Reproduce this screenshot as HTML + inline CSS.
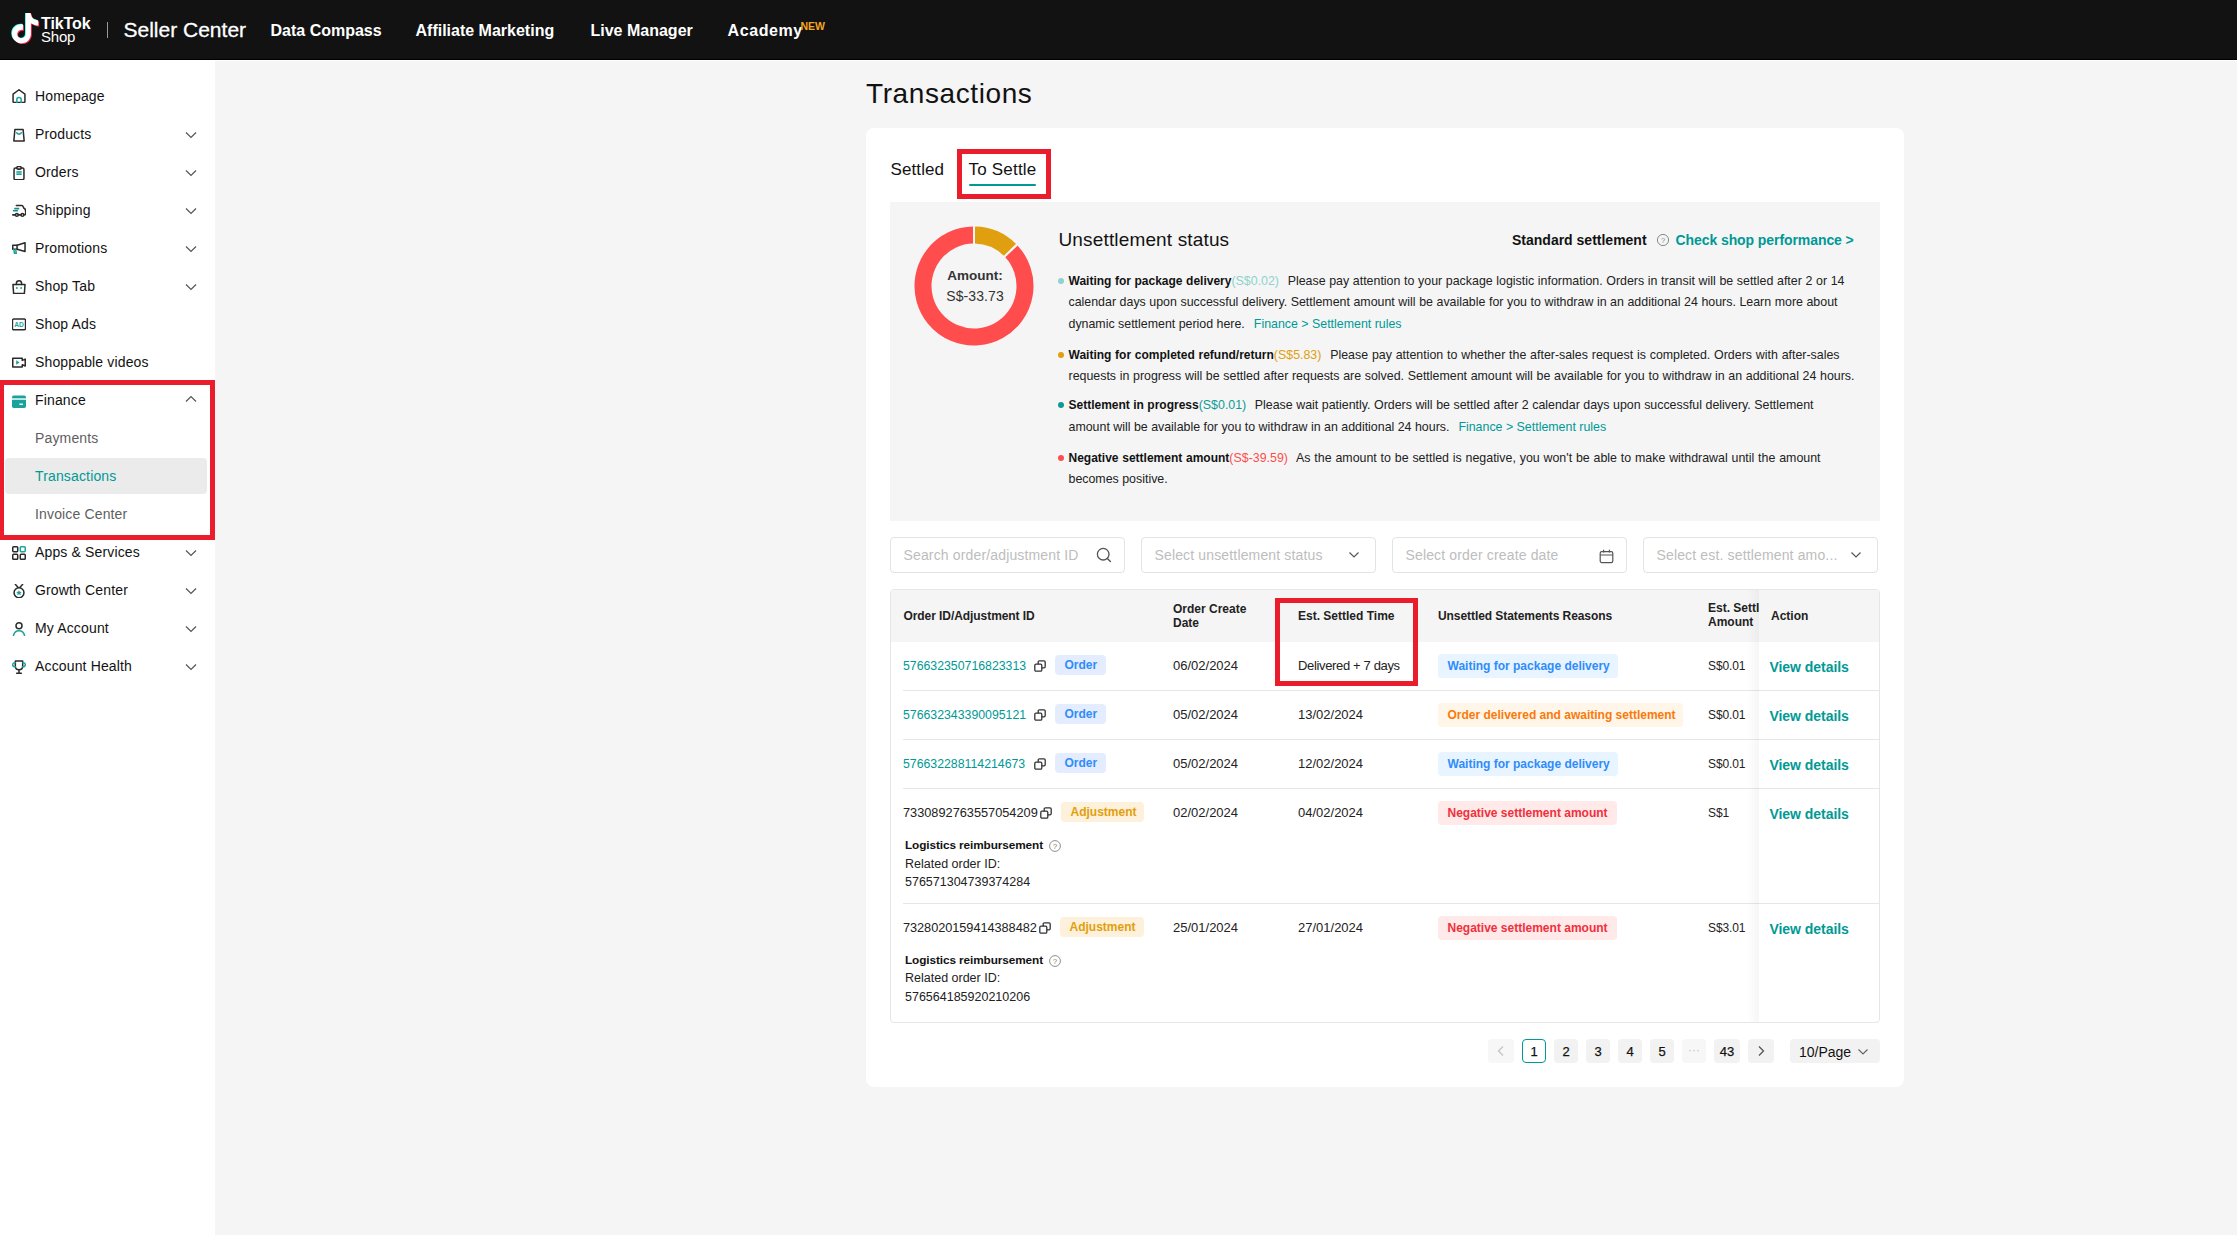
<!DOCTYPE html>
<html><head><meta charset="utf-8"><title>Transactions</title>
<style>
html,body{margin:0;padding:0;}
body{width:2237px;height:1235px;overflow:hidden;background:#f5f5f5;position:relative;font-family:"Liberation Sans",sans-serif;}
.t{position:absolute;white-space:nowrap;}
svg{display:block}
</style></head><body>

<div style="position:absolute;left:0px;top:0px;width:2237px;height:59px;background:#121212"></div>
<div style="position:absolute;left:0px;top:59px;width:2237px;height:1px;background:#000"></div>
<div style="position:absolute;left:0px;top:60px;width:2237px;height:1px;background:#fff"></div>
<svg style="position:absolute;left:9.5px;top:13.2px;" width="31" height="34" viewBox="0 0 31 34" fill="none"><g transform="scale(1.26)"><path transform="translate(-0.6,-0.5)" d="M12.525.02c1.31-.02 2.61-.01 3.91-.02.08 1.53.63 3.09 1.75 4.17 1.12 1.11 2.7 1.62 4.24 1.79v4.03c-1.44-.05-2.89-.35-4.2-.97-.57-.26-1.1-.59-1.62-.93-.01 2.92.01 5.84-.02 8.75-.08 1.4-.54 2.79-1.35 3.94-1.310 1.92-3.58 3.17-5.91 3.21-1.43.08-2.86-.31-4.08-1.030-2.02-1.19-3.44-3.37-3.65-5.71-.02-.5-.03-1-.01-1.49.18-1.9 1.12-3.72 2.58-4.96 1.66-1.44 3.98-2.13 6.15-1.72.02 1.48-.04 2.96-.04 4.44-.99-.32-2.15-.23-3.02.37-.63.41-1.11 1.04-1.36 1.750-.21.51-.15 1.07-.14 1.61.24 1.64 1.82 3.02 3.5 2.87 1.12-.01 2.19-.66 2.77-1.61.19-.33.4-.67.41-1.06.1-1.79.06-3.57.07-5.36.01-4.03-.01-8.05.02-12.07z" fill="#25f4ee"/><path transform="translate(0.7,0.7)" d="M12.525.02c1.31-.02 2.61-.01 3.91-.02.08 1.53.63 3.09 1.75 4.17 1.12 1.11 2.7 1.62 4.24 1.79v4.03c-1.44-.05-2.89-.35-4.2-.97-.57-.26-1.1-.59-1.62-.93-.01 2.92.01 5.84-.02 8.75-.08 1.4-.54 2.79-1.35 3.94-1.310 1.92-3.58 3.17-5.91 3.21-1.43.08-2.86-.31-4.08-1.030-2.02-1.19-3.44-3.37-3.65-5.71-.02-.5-.03-1-.01-1.49.18-1.9 1.12-3.72 2.58-4.96 1.66-1.44 3.98-2.13 6.15-1.72.02 1.48-.04 2.96-.04 4.44-.99-.32-2.15-.23-3.02.37-.63.41-1.11 1.04-1.36 1.750-.21.51-.15 1.07-.14 1.61.24 1.64 1.82 3.02 3.5 2.87 1.12-.01 2.19-.66 2.77-1.61.19-.33.4-.67.41-1.06.1-1.79.06-3.57.07-5.36.01-4.03-.01-8.05.02-12.07z" fill="#fe2c55"/><path d="M12.525.02c1.31-.02 2.61-.01 3.91-.02.08 1.53.63 3.09 1.75 4.17 1.12 1.11 2.7 1.62 4.24 1.79v4.03c-1.44-.05-2.89-.35-4.2-.97-.57-.26-1.1-.59-1.62-.93-.01 2.92.01 5.84-.02 8.75-.08 1.4-.54 2.79-1.35 3.94-1.310 1.92-3.58 3.17-5.91 3.21-1.43.08-2.86-.31-4.08-1.030-2.02-1.19-3.44-3.37-3.65-5.71-.02-.5-.03-1-.01-1.49.18-1.9 1.12-3.72 2.58-4.96 1.66-1.44 3.98-2.13 6.15-1.72.02 1.48-.04 2.96-.04 4.44-.99-.32-2.15-.23-3.02.37-.63.41-1.11 1.04-1.36 1.750-.21.51-.15 1.07-.14 1.61.24 1.64 1.82 3.02 3.5 2.87 1.12-.01 2.19-.66 2.77-1.61.19-.33.4-.67.41-1.06.1-1.79.06-3.57.07-5.36.01-4.03-.01-8.05.02-12.07z" fill="#fff"/></g></svg>
<div class="t" style="left:41px;top:15.86px;font-size:16px;line-height:16px;font-weight:700;color:#fff;letter-spacing:-0.1px">TikTok</div>
<div class="t" style="left:41px;top:29.30px;font-size:15px;line-height:15px;font-weight:400;color:#fff;letter-spacing:-0.2px">Shop</div>
<div style="position:absolute;left:107px;top:22px;width:1px;height:16px;background:#9a9a9a"></div>
<div class="t" style="left:123.5px;top:19.22px;font-size:21px;line-height:21px;font-weight:400;color:#fff;-webkit-text-stroke:0.3px #fff">Seller Center</div>
<div class="t" style="left:270.5px;top:22.66px;font-size:16px;line-height:16px;font-weight:700;color:#fff;">Data Compass</div>
<div class="t" style="left:415.5px;top:22.66px;font-size:16px;line-height:16px;font-weight:700;color:#fff;">Affiliate Marketing</div>
<div class="t" style="left:590.5px;top:22.66px;font-size:16px;line-height:16px;font-weight:700;color:#fff;">Live Manager</div>
<div class="t" style="left:727.5px;top:22.66px;font-size:16px;line-height:16px;font-weight:700;color:#fff;letter-spacing:0.6px">Academy</div>
<div class="t" style="left:800.5px;top:21.11px;font-size:10.5px;line-height:10.5px;font-weight:700;color:#f5a623;">NEW</div>
<div style="position:absolute;left:0px;top:60px;width:215px;height:1175px;background:#fff"></div>
<div style="position:absolute;left:5px;top:458px;width:202px;height:36px;background:#ebebeb;border-radius:4px"></div>
<div class="t" style="left:35px;top:88.95px;font-size:14px;line-height:14px;font-weight:400;color:#121212;letter-spacing:0.15px">Homepage</div>
<div class="t" style="left:35px;top:126.95px;font-size:14px;line-height:14px;font-weight:400;color:#121212;letter-spacing:0.15px">Products</div>
<svg style="position:absolute;left:185px;top:131px;" width="12" height="8" viewBox="0 0 12 8" fill="none"><path d="M1 1.5 L6 6.5 L11 1.5" stroke="#555" stroke-width="1.2" fill="none"/></svg>
<div class="t" style="left:35px;top:164.95px;font-size:14px;line-height:14px;font-weight:400;color:#121212;letter-spacing:0.15px">Orders</div>
<svg style="position:absolute;left:185px;top:169px;" width="12" height="8" viewBox="0 0 12 8" fill="none"><path d="M1 1.5 L6 6.5 L11 1.5" stroke="#555" stroke-width="1.2" fill="none"/></svg>
<div class="t" style="left:35px;top:202.95px;font-size:14px;line-height:14px;font-weight:400;color:#121212;letter-spacing:0.15px">Shipping</div>
<svg style="position:absolute;left:185px;top:207px;" width="12" height="8" viewBox="0 0 12 8" fill="none"><path d="M1 1.5 L6 6.5 L11 1.5" stroke="#555" stroke-width="1.2" fill="none"/></svg>
<div class="t" style="left:35px;top:240.95px;font-size:14px;line-height:14px;font-weight:400;color:#121212;letter-spacing:0.15px">Promotions</div>
<svg style="position:absolute;left:185px;top:245px;" width="12" height="8" viewBox="0 0 12 8" fill="none"><path d="M1 1.5 L6 6.5 L11 1.5" stroke="#555" stroke-width="1.2" fill="none"/></svg>
<div class="t" style="left:35px;top:278.95px;font-size:14px;line-height:14px;font-weight:400;color:#121212;letter-spacing:0.15px">Shop Tab</div>
<svg style="position:absolute;left:185px;top:283px;" width="12" height="8" viewBox="0 0 12 8" fill="none"><path d="M1 1.5 L6 6.5 L11 1.5" stroke="#555" stroke-width="1.2" fill="none"/></svg>
<div class="t" style="left:35px;top:316.95px;font-size:14px;line-height:14px;font-weight:400;color:#121212;letter-spacing:0.15px">Shop Ads</div>
<div class="t" style="left:35px;top:354.95px;font-size:14px;line-height:14px;font-weight:400;color:#121212;letter-spacing:0.15px">Shoppable videos</div>
<div class="t" style="left:35px;top:392.95px;font-size:14px;line-height:14px;font-weight:400;color:#121212;letter-spacing:0.15px">Finance</div>
<svg style="position:absolute;left:185px;top:395px;" width="12" height="8" viewBox="0 0 12 8" fill="none"><path d="M1 6.5 L6 1.5 L11 6.5" stroke="#555" stroke-width="1.2" fill="none"/></svg>
<div class="t" style="left:35px;top:430.95px;font-size:14px;line-height:14px;font-weight:400;color:#5e5e5e;letter-spacing:0.15px">Payments</div>
<div class="t" style="left:35px;top:468.95px;font-size:14px;line-height:14px;font-weight:400;color:#009995;letter-spacing:0.15px">Transactions</div>
<div class="t" style="left:35px;top:506.95px;font-size:14px;line-height:14px;font-weight:400;color:#5e5e5e;letter-spacing:0.15px">Invoice Center</div>
<div class="t" style="left:35px;top:544.95px;font-size:14px;line-height:14px;font-weight:400;color:#121212;letter-spacing:0.15px">Apps &amp; Services</div>
<svg style="position:absolute;left:185px;top:549px;" width="12" height="8" viewBox="0 0 12 8" fill="none"><path d="M1 1.5 L6 6.5 L11 1.5" stroke="#555" stroke-width="1.2" fill="none"/></svg>
<div class="t" style="left:35px;top:582.95px;font-size:14px;line-height:14px;font-weight:400;color:#121212;letter-spacing:0.15px">Growth Center</div>
<svg style="position:absolute;left:185px;top:587px;" width="12" height="8" viewBox="0 0 12 8" fill="none"><path d="M1 1.5 L6 6.5 L11 1.5" stroke="#555" stroke-width="1.2" fill="none"/></svg>
<div class="t" style="left:35px;top:620.95px;font-size:14px;line-height:14px;font-weight:400;color:#121212;letter-spacing:0.15px">My Account</div>
<svg style="position:absolute;left:185px;top:625px;" width="12" height="8" viewBox="0 0 12 8" fill="none"><path d="M1 1.5 L6 6.5 L11 1.5" stroke="#555" stroke-width="1.2" fill="none"/></svg>
<div class="t" style="left:35px;top:658.95px;font-size:14px;line-height:14px;font-weight:400;color:#121212;letter-spacing:0.15px">Account Health</div>
<svg style="position:absolute;left:185px;top:663px;" width="12" height="8" viewBox="0 0 12 8" fill="none"><path d="M1 1.5 L6 6.5 L11 1.5" stroke="#555" stroke-width="1.2" fill="none"/></svg>
<svg style="position:absolute;left:12px;top:89px;" width="14" height="14" viewBox="0.5 0.5 13 13" fill="none"><path d="M1.5 5.2 L7 1.2 L12.5 5.2 V12 Q12.5 13 11.5 13 H2.5 Q1.5 13 1.5 12 Z" stroke="#2b2b2b" stroke-width="1.4" fill="none" stroke-linejoin="round" stroke-linecap="round"/><path d="M5 13 V10.2 Q5 8.5 7 8.5 Q9 8.5 9 10.2 V13" stroke="#1aa39c" stroke-width="1.4" fill="none" stroke-linecap="round"/></svg>
<svg style="position:absolute;left:12px;top:128px;" width="14" height="14" viewBox="0.5 0.5 13 13" fill="none"><path d="M3.2 1.8 H10.8 L11.8 12.6 H2.2 Z" stroke="#2b2b2b" stroke-width="1.4" fill="none" stroke-linejoin="round" stroke-linecap="round"/><path d="M4.8 5 Q7 7.4 9.2 5" stroke="#1aa39c" stroke-width="1.4" fill="none" stroke-linecap="round"/></svg>
<svg style="position:absolute;left:12px;top:166px;" width="14" height="14" viewBox="0.5 0.5 13 13" fill="none"><rect x="2.4" y="2.4" width="9.2" height="10.8" rx="1.3" stroke="#2b2b2b" stroke-width="1.4" fill="none" stroke-linejoin="round" stroke-linecap="round"/><rect x="5" y="1" width="4" height="2.4" rx="1.1" fill="#fff" stroke="#2b2b2b" stroke-width="1.4" fill="none" stroke-linejoin="round" stroke-linecap="round"/><rect x="4.6" y="5.4" width="4.8" height="3.4" fill="#8fd3cf"/><rect x="4.6" y="5.4" width="4.8" height="1.2" fill="#1aa39c"/><rect x="4.6" y="7.6" width="4.8" height="1.2" fill="#1aa39c"/></svg>
<svg style="position:absolute;left:12px;top:204px;" width="14" height="14" viewBox="0.5 0.5 13 13" fill="none"><path d="M4.5 2 H9.6 Q10.6 2 11 3.2 L11.3 4.2 Q13.2 4.8 13.2 7.4 V9.4 Q13.2 10.4 12 10.4 H11.6" stroke="#2b2b2b" stroke-width="1.4" fill="none" stroke-linejoin="round" stroke-linecap="round"/><path d="M2.6 4.8 H7.2 M1.4 6.8 H6" stroke="#1a8f89" stroke-width="1.5"/><circle cx="5" cy="10.6" r="1.3" stroke="#2b2b2b" stroke-width="1.4" fill="none" stroke-linejoin="round" stroke-linecap="round"/><circle cx="10.2" cy="10.6" r="1.3" stroke="#2b2b2b" stroke-width="1.4" fill="none" stroke-linejoin="round" stroke-linecap="round"/><path d="M1.2 10.6 H3.6 M6.4 10.6 H8.8" stroke="#2b2b2b" stroke-width="1.4" fill="none" stroke-linejoin="round" stroke-linecap="round"/></svg>
<svg style="position:absolute;left:12px;top:242px;" width="14" height="14" viewBox="0.5 0.5 13 13" fill="none"><path d="M1.2 3.6 H5.2 V7.2 H1.2 Z" stroke="#2b2b2b" stroke-width="1.4" fill="none" stroke-linejoin="round" stroke-linecap="round"/><path d="M5.2 3.6 L12.6 1.2 V9.4 L5.2 7.2" stroke="#2b2b2b" stroke-width="1.4" fill="none" stroke-linejoin="round" stroke-linecap="round"/><path d="M2.2 7.4 L2.8 11 H4.4 L4 7.4" stroke="#1aa39c" stroke-width="1.4" fill="none" stroke-linecap="round"/></svg>
<svg style="position:absolute;left:12px;top:280px;" width="14" height="14" viewBox="0.5 0.5 13 13" fill="none"><path d="M1.4 4.6 H12.6 L12 13 H2 Z" stroke="#2b2b2b" stroke-width="1.4" fill="none" stroke-linejoin="round" stroke-linecap="round"/><path d="M4.6 4.6 V3.6 Q4.6 1.2 7 1.2 Q9.4 1.2 9.4 3.6 V4.6" stroke="#2b2b2b" stroke-width="1.4" fill="none" stroke-linejoin="round" stroke-linecap="round"/><circle cx="5" cy="8" r="0.9" fill="#1aa39c"/><circle cx="9" cy="8" r="0.9" fill="#1aa39c"/></svg>
<svg style="position:absolute;left:12px;top:318px;" width="14" height="14" viewBox="0.5 0.5 13 13" fill="none"><rect x="0.9" y="1.5" width="12.2" height="10" rx="1.3" stroke="#2b2b2b" stroke-width="1.4" fill="none" stroke-linejoin="round" stroke-linecap="round"/><text x="7" y="9.2" font-family="Liberation Sans" font-size="6.2" font-weight="700" fill="#1aa39c" text-anchor="middle">AD</text></svg>
<svg style="position:absolute;left:12px;top:356px;" width="14" height="14" viewBox="0.5 0.5 13 13" fill="none"><path d="M1.2 2.5 H10 V4.6 L12.8 3.4 V9.8 L10 8.6 V10.7 H1.2 Z" stroke="#2b2b2b" stroke-width="1.4" fill="none" stroke-linejoin="round" stroke-linecap="round"/><path d="M4.4 4.4 L7.6 6.5 L4.4 8.6 Z" fill="#1aa39c"/></svg>
<svg style="position:absolute;left:12px;top:395px;" width="14" height="14" viewBox="0.5 0.5 13 13" fill="none"><rect x="0.5" y="1" width="13" height="11.5" rx="1.6" fill="#1aa39c"/><rect x="0.5" y="3.6" width="13" height="1.3" fill="#fff"/><rect x="7.4" y="8.4" width="3.2" height="1.4" fill="#fff"/></svg>
<svg style="position:absolute;left:12px;top:546px;" width="14" height="14" viewBox="0.5 0.5 13 13" fill="none"><rect x="1.2" y="1.2" width="4.6" height="4.6" rx="0.8" stroke="#2b2b2b" stroke-width="1.4" fill="none" stroke-linejoin="round" stroke-linecap="round"/><rect x="8.2" y="1.2" width="4.6" height="4.6" rx="0.8" stroke="#1aa39c" stroke-width="1.4"/><rect x="1.2" y="8.2" width="4.6" height="4.6" rx="0.8" stroke="#2b2b2b" stroke-width="1.4" fill="none" stroke-linejoin="round" stroke-linecap="round"/><rect x="8.2" y="8.2" width="4.6" height="4.6" rx="0.8" stroke="#2b2b2b" stroke-width="1.4" fill="none" stroke-linejoin="round" stroke-linecap="round"/></svg>
<svg style="position:absolute;left:12px;top:584px;" width="14" height="14" viewBox="0.5 0.5 13 13" fill="none"><circle cx="7" cy="8.6" r="4.6" stroke="#2b2b2b" stroke-width="1.4" fill="none" stroke-linejoin="round" stroke-linecap="round"/><path d="M3.6 0.8 L6 3.6 M10.4 0.8 L8 3.6" stroke="#2b2b2b" stroke-width="1.4" fill="none" stroke-linejoin="round" stroke-linecap="round"/><path d="M7 6.2 L7.8 7.8 L9.6 8 L8.3 9.2 L8.6 11 L7 10.1 L5.4 11 L5.7 9.2 L4.4 8 L6.2 7.8 Z" fill="#1aa39c"/></svg>
<svg style="position:absolute;left:12px;top:622px;" width="14" height="14" viewBox="0.5 0.5 13 13" fill="none"><circle cx="7" cy="4" r="2.8" stroke="#2b2b2b" stroke-width="1.4" fill="none" stroke-linejoin="round" stroke-linecap="round"/><path d="M1.8 13.4 Q2.6 8.6 7 8.6 Q11.4 8.6 12.2 13.4" stroke="#1aa39c" stroke-width="1.4" fill="none" stroke-linecap="round"/></svg>
<svg style="position:absolute;left:12px;top:660px;" width="14" height="14" viewBox="0.5 0.5 13 13" fill="none"><path d="M3.6 1.4 H10.4 V6.4 Q10.4 9.6 7 9.6 Q3.6 9.6 3.6 6.4 Z" stroke="#2b2b2b" stroke-width="1.4" fill="none" stroke-linejoin="round" stroke-linecap="round"/><path d="M7 9.6 V12.6 M4.8 12.8 H9.2" stroke="#2b2b2b" stroke-width="1.4" fill="none" stroke-linejoin="round" stroke-linecap="round"/><path d="M3.4 3 Q1 3 1.2 5.2 Q1.4 6.8 3.6 6.8 M10.6 3 Q13 3 12.8 5.2 Q12.6 6.8 10.4 6.8" stroke="#1aa39c" stroke-width="1.4" fill="none" stroke-linecap="round"/></svg>
<div style="position:absolute;left:-1px;top:380px;width:216px;height:159.5px;box-sizing:border-box;border:5px solid #e91d2b"></div>
<div class="t" style="left:866px;top:79.60px;font-size:28px;line-height:28px;font-weight:400;color:#121212;letter-spacing:0.6px">Transactions</div>
<div style="position:absolute;left:866px;top:128px;width:1038px;height:959px;background:#fff;border-radius:8px"></div>
<div class="t" style="left:890.5px;top:160.91px;font-size:17px;line-height:17px;font-weight:400;color:#121212;letter-spacing:0.1px">Settled</div>
<div class="t" style="left:968.5px;top:160.91px;font-size:17px;line-height:17px;font-weight:400;color:#121212;letter-spacing:0.2px">To Settle</div>
<div style="position:absolute;left:969px;top:184px;width:67px;height:2px;background:#009995;border-radius:1px"></div>
<div style="position:absolute;left:957px;top:149px;width:94px;height:50px;box-sizing:border-box;border:5px solid #e91d2b"></div>
<div style="position:absolute;left:890px;top:202px;width:990px;height:319px;background:#f5f5f5"></div>
<svg style="position:absolute;left:910px;top:222px;" width="128" height="128" viewBox="0 0 128 128" fill="none"><path d="M64.89 13.01 A51 51 0 0 1 100.06 27.94" stroke="#e09f0e" stroke-width="17"/><path d="M101.30 29.22 A51 51 0 1 1 63.11 13.01" stroke="#ff4d4d" stroke-width="17"/><line x1="64.00" y1="23.00" x2="64.00" y2="2.00" stroke="#f5f5f5" stroke-width="2"/><line x1="93.49" y1="35.52" x2="108.60" y2="20.93" stroke="#f5f5f5" stroke-width="2"/></svg>
<div class="t" style="left:945px;top:269.27px;font-size:13.5px;line-height:13.5px;font-weight:700;color:#333;width:60px;text-align:center">Amount:</div>
<div class="t" style="left:945px;top:288.85px;font-size:14px;line-height:14px;font-weight:400;color:#333;width:60px;text-align:center;letter-spacing:0.1px">S$-33.73</div>
<div class="t" style="left:1058.5px;top:229.92px;font-size:19px;line-height:19px;font-weight:400;color:#121212;letter-spacing:0.15px">Unsettlement status</div>
<div class="t" style="left:1512px;top:233.15px;font-size:14px;line-height:14px;font-weight:700;color:#121212;">Standard settlement</div>
<svg style="position:absolute;left:1656px;top:233px;" width="14" height="14" viewBox="0 0 14 14" fill="none"><circle cx="7" cy="7" r="5.6" stroke="#8a8a8a" stroke-width="1"/><text x="7" y="9.6" font-family="Liberation Sans" font-size="7.5" fill="#8a8a8a" text-anchor="middle">?</text></svg>
<div class="t" style="left:1675.5px;top:233.15px;font-size:14px;line-height:14px;font-weight:700;color:#009995;letter-spacing:-0.08px">Check shop performance &gt;</div>
<div style="position:absolute;left:1058px;top:278.0px;width:6px;height:6px;background:#8ed3ce;border-radius:50%"></div>
<div class="t" style="left:1068.5px;top:274.80px;font-size:12.4px;line-height:12.4px;font-weight:400;color:#222;width:776px;text-align:justify;text-align-last:justify;"><b style="color:#121212;font-size:12px">Waiting for package delivery</b><span style="color:#8ed3ce;margin-right:5px">(S$0.02)</span> Please pay attention to your package logistic information. Orders in transit will be settled after 2 or 14</div>
<div class="t" style="left:1068.5px;top:295.80px;font-size:12.4px;line-height:12.4px;font-weight:400;color:#222;width:769px;text-align:justify;text-align-last:justify;">calendar days upon successful delivery. Settlement amount will be available for you to withdraw in an additional 24 hours. Learn more about</div>
<div class="t" style="left:1068.5px;top:317.80px;font-size:12.4px;line-height:12.4px;font-weight:400;color:#222;">dynamic settlement period here.<span style="color:#009995;margin-left:9px">Finance &gt; Settlement rules</span></div>
<div style="position:absolute;left:1058px;top:352.3px;width:6px;height:6px;background:#e09f0e;border-radius:50%"></div>
<div class="t" style="left:1068.5px;top:349.10px;font-size:12.4px;line-height:12.4px;font-weight:400;color:#222;width:771px;text-align:justify;text-align-last:justify;"><b style="color:#121212;font-size:12px">Waiting for completed refund/return</b><span style="color:#e09f0e;margin-right:5px">(S$5.83)</span> Please pay attention to whether the after-sales request is completed. Orders with after-sales</div>
<div class="t" style="left:1068.5px;top:369.80px;font-size:12.4px;line-height:12.4px;font-weight:400;color:#222;width:786px;text-align:justify;text-align-last:justify;">requests in progress will be settled after requests are solved. Settlement amount will be available for you to withdraw in an additional 24 hours.</div>
<div style="position:absolute;left:1058px;top:402.2px;width:6px;height:6px;background:#0f9a94;border-radius:50%"></div>
<div class="t" style="left:1068.5px;top:399.00px;font-size:12.4px;line-height:12.4px;font-weight:400;color:#222;width:745px;text-align:justify;text-align-last:justify;"><b style="color:#121212;font-size:12px">Settlement in progress</b><span style="color:#0f9a94;margin-right:5px">(S$0.01)</span> Please wait patiently. Orders will be settled after 2 calendar days upon successful delivery. Settlement</div>
<div class="t" style="left:1068.5px;top:421.00px;font-size:12.4px;line-height:12.4px;font-weight:400;color:#222;">amount will be available for you to withdraw in an additional 24 hours.<span style="color:#009995;margin-left:9px">Finance &gt; Settlement rules</span></div>
<div style="position:absolute;left:1058px;top:455.3px;width:6px;height:6px;background:#ff4d4d;border-radius:50%"></div>
<div class="t" style="left:1068.5px;top:452.10px;font-size:12.4px;line-height:12.4px;font-weight:400;color:#222;width:752px;text-align:justify;text-align-last:justify;"><b style="color:#121212;font-size:12px">Negative settlement amount</b><span style="color:#ff4d4d;margin-right:5px">(S$-39.59)</span> As the amount to be settled is negative, you won't be able to make withdrawal until the amount</div>
<div class="t" style="left:1068.5px;top:472.80px;font-size:12.4px;line-height:12.4px;font-weight:400;color:#222;">becomes positive.</div>
<div style="position:absolute;left:890px;top:537px;width:235px;height:36px;box-sizing:border-box;border:1px solid #e3e3e3;border-radius:4px;background:#fff"></div>
<div class="t" style="left:903.5px;top:548.35px;font-size:14px;line-height:14px;font-weight:400;color:#bdbdbd;letter-spacing:0.15px">Search order/adjustment ID</div>
<svg style="position:absolute;left:1096px;top:547px;" width="17" height="17" viewBox="0 0 17 17" fill="none"><circle cx="7.2" cy="7.2" r="5.8" stroke="#555" stroke-width="1.3"/><path d="M11.4 11.4 L14.4 14.4" stroke="#555" stroke-width="1.4" stroke-linecap="round"/></svg>
<div style="position:absolute;left:1141px;top:537px;width:235px;height:36px;box-sizing:border-box;border:1px solid #e3e3e3;border-radius:4px;background:#fff"></div>
<div class="t" style="left:1154.5px;top:548.35px;font-size:14px;line-height:14px;font-weight:400;color:#bdbdbd;letter-spacing:0.15px">Select unsettlement status</div>
<svg style="position:absolute;left:1348px;top:550px;" width="12" height="10" viewBox="0 0 12 10" fill="none"><path d="M1.5 2.5 L6 7 L10.5 2.5" stroke="#555" stroke-width="1.2" fill="none"/></svg>
<div style="position:absolute;left:1392px;top:537px;width:235px;height:36px;box-sizing:border-box;border:1px solid #e3e3e3;border-radius:4px;background:#fff"></div>
<div class="t" style="left:1405.5px;top:548.35px;font-size:14px;line-height:14px;font-weight:400;color:#bdbdbd;letter-spacing:0.15px">Select order create date</div>
<svg style="position:absolute;left:1598.5px;top:548.5px;" width="15" height="15" viewBox="0 0 15 15" fill="none"><rect x="1.2" y="2.6" width="12.6" height="11" rx="1.6" stroke="#555" stroke-width="1.2"/><path d="M1.2 6 H13.8 M4.6 0.8 V3.6 M10.4 0.8 V3.6" stroke="#555" stroke-width="1.2"/></svg>
<div style="position:absolute;left:1643px;top:537px;width:235px;height:36px;box-sizing:border-box;border:1px solid #e3e3e3;border-radius:4px;background:#fff"></div>
<div class="t" style="left:1656.5px;top:548.35px;font-size:14px;line-height:14px;font-weight:400;color:#bdbdbd;letter-spacing:0.15px">Select est. settlement amo...</div>
<svg style="position:absolute;left:1850px;top:550px;" width="12" height="10" viewBox="0 0 12 10" fill="none"><path d="M1.5 2.5 L6 7 L10.5 2.5" stroke="#555" stroke-width="1.2" fill="none"/></svg>
<div style="position:absolute;left:890px;top:589px;width:990px;height:434px;box-sizing:border-box;border:1px solid #e6e6e6;border-radius:4px;background:#fff;overflow:hidden"></div>
<div style="position:absolute;left:891px;top:590px;width:988px;height:52px;background:#f5f5f5;border-radius:3px 3px 0 0"></div>
<div style="position:absolute;left:903px;top:690px;width:976px;height:1px;background:#e6e6e6"></div>
<div style="position:absolute;left:903px;top:739px;width:976px;height:1px;background:#e6e6e6"></div>
<div style="position:absolute;left:903px;top:788px;width:976px;height:1px;background:#e6e6e6"></div>
<div style="position:absolute;left:903px;top:903px;width:976px;height:1px;background:#e6e6e6"></div>
<div class="t" style="left:903.5px;top:609.94px;font-size:12px;line-height:12px;font-weight:700;color:#222;letter-spacing:-0.07px">Order ID/Adjustment ID</div>
<div class="t" style="left:1173px;top:603.04px;font-size:12px;line-height:12px;font-weight:700;color:#222;">Order Create</div>
<div class="t" style="left:1173px;top:616.84px;font-size:12px;line-height:12px;font-weight:700;color:#222;">Date</div>
<div class="t" style="left:1298px;top:609.84px;font-size:12px;line-height:12px;font-weight:700;color:#222;">Est. Settled Time</div>
<div class="t" style="left:1438px;top:610.34px;font-size:12px;line-height:12px;font-weight:700;color:#222;letter-spacing:-0.07px">Unsettled Statements Reasons</div>
<div class="t" style="left:1708px;top:602.44px;font-size:12px;line-height:12px;font-weight:700;color:#222;width:51px;overflow:hidden">Est. Settlement</div>
<div class="t" style="left:1708px;top:616.44px;font-size:12px;line-height:12px;font-weight:700;color:#222;">Amount</div>
<div style="position:absolute;left:1747px;top:590px;width:12px;height:432px;background:linear-gradient(to right, rgba(0,0,0,0), rgba(0,0,0,0.035))"></div>
<div class="t" style="left:1771px;top:609.64px;font-size:12px;line-height:12px;font-weight:700;color:#222;">Action</div>
<div class="t" style="left:903px;top:659.59px;font-size:12.3px;line-height:12.3px;font-weight:400;color:#009995;">576632350716823313</div>
<svg style="position:absolute;left:1034px;top:660px;" width="12" height="12" viewBox="0 0 12 12" fill="none"><rect x="0.8" y="4.2" width="7" height="7" rx="1.2" stroke="#333" stroke-width="1.3"/><path d="M4.2 4.2 V2 Q4.2 0.8 5.4 0.8 H10 Q11.2 0.8 11.2 2 V6.6 Q11.2 7.8 10 7.8 H7.8" stroke="#333" stroke-width="1.3" fill="none"/></svg>
<div style="position:absolute;left:1055px;top:655px;width:51px;height:20px;background:#e3edff;border-radius:4px"></div>
<div class="t" style="left:1064.5px;top:659.14px;font-size:12px;line-height:12px;font-weight:700;color:#2f8cfa;width:32px;text-align:center">Order</div>
<div class="t" style="left:1173px;top:659.00px;font-size:13px;line-height:13px;font-weight:400;color:#222;">06/02/2024</div>
<div class="t" style="left:1298px;top:659.00px;font-size:13px;line-height:13px;font-weight:400;color:#222;letter-spacing:-0.35px">Delivered + 7 days</div>
<div style="position:absolute;left:1438px;top:654px;width:180px;height:24px;background:#e8f4ff;border-radius:4px"></div>
<div class="t" style="left:1447.5px;top:660.14px;font-size:12px;line-height:12px;font-weight:700;color:#2f8cfa;width:161px;text-align:center">Waiting for package delivery</div>
<div class="t" style="left:1708px;top:659.84px;font-size:12px;line-height:12px;font-weight:400;color:#222;letter-spacing:-0.1px">S$0.01</div>
<div class="t" style="left:1769.5px;top:659.65px;font-size:14px;line-height:14px;font-weight:700;color:#009995;letter-spacing:-0.05px">View details</div>
<div class="t" style="left:903px;top:708.79px;font-size:12.3px;line-height:12.3px;font-weight:400;color:#009995;">576632343390095121</div>
<svg style="position:absolute;left:1034px;top:709px;" width="12" height="12" viewBox="0 0 12 12" fill="none"><rect x="0.8" y="4.2" width="7" height="7" rx="1.2" stroke="#333" stroke-width="1.3"/><path d="M4.2 4.2 V2 Q4.2 0.8 5.4 0.8 H10 Q11.2 0.8 11.2 2 V6.6 Q11.2 7.8 10 7.8 H7.8" stroke="#333" stroke-width="1.3" fill="none"/></svg>
<div style="position:absolute;left:1055px;top:704px;width:51px;height:20px;background:#e3edff;border-radius:4px"></div>
<div class="t" style="left:1064.5px;top:708.14px;font-size:12px;line-height:12px;font-weight:700;color:#2f8cfa;width:32px;text-align:center">Order</div>
<div class="t" style="left:1173px;top:708.20px;font-size:13px;line-height:13px;font-weight:400;color:#222;">05/02/2024</div>
<div class="t" style="left:1298px;top:708.20px;font-size:13px;line-height:13px;font-weight:400;color:#222;">13/02/2024</div>
<div style="position:absolute;left:1438px;top:703px;width:245px;height:24px;background:#fff5e8;border-radius:4px"></div>
<div class="t" style="left:1447.5px;top:709.14px;font-size:12px;line-height:12px;font-weight:700;color:#f97a0b;width:226px;text-align:center">Order delivered and awaiting settlement</div>
<div class="t" style="left:1708px;top:709.04px;font-size:12px;line-height:12px;font-weight:400;color:#222;letter-spacing:-0.1px">S$0.01</div>
<div class="t" style="left:1769.5px;top:708.85px;font-size:14px;line-height:14px;font-weight:700;color:#009995;letter-spacing:-0.05px">View details</div>
<div class="t" style="left:903px;top:757.59px;font-size:12.3px;line-height:12.3px;font-weight:400;color:#009995;">576632288114214673</div>
<svg style="position:absolute;left:1034px;top:758px;" width="12" height="12" viewBox="0 0 12 12" fill="none"><rect x="0.8" y="4.2" width="7" height="7" rx="1.2" stroke="#333" stroke-width="1.3"/><path d="M4.2 4.2 V2 Q4.2 0.8 5.4 0.8 H10 Q11.2 0.8 11.2 2 V6.6 Q11.2 7.8 10 7.8 H7.8" stroke="#333" stroke-width="1.3" fill="none"/></svg>
<div style="position:absolute;left:1055px;top:753px;width:51px;height:20px;background:#e3edff;border-radius:4px"></div>
<div class="t" style="left:1064.5px;top:757.14px;font-size:12px;line-height:12px;font-weight:700;color:#2f8cfa;width:32px;text-align:center">Order</div>
<div class="t" style="left:1173px;top:757.00px;font-size:13px;line-height:13px;font-weight:400;color:#222;">05/02/2024</div>
<div class="t" style="left:1298px;top:757.00px;font-size:13px;line-height:13px;font-weight:400;color:#222;">12/02/2024</div>
<div style="position:absolute;left:1438px;top:752px;width:180px;height:24px;background:#e8f4ff;border-radius:4px"></div>
<div class="t" style="left:1447.5px;top:758.14px;font-size:12px;line-height:12px;font-weight:700;color:#2f8cfa;width:161px;text-align:center">Waiting for package delivery</div>
<div class="t" style="left:1708px;top:757.84px;font-size:12px;line-height:12px;font-weight:400;color:#222;letter-spacing:-0.1px">S$0.01</div>
<div class="t" style="left:1769.5px;top:757.65px;font-size:14px;line-height:14px;font-weight:700;color:#009995;letter-spacing:-0.05px">View details</div>
<div class="t" style="left:903px;top:806.51px;font-size:12.75px;line-height:12.75px;font-weight:400;color:#222;">7330892763557054209</div>
<svg style="position:absolute;left:1040px;top:807px;" width="12" height="12" viewBox="0 0 12 12" fill="none"><rect x="0.8" y="4.2" width="7" height="7" rx="1.2" stroke="#333" stroke-width="1.3"/><path d="M4.2 4.2 V2 Q4.2 0.8 5.4 0.8 H10 Q11.2 0.8 11.2 2 V6.6 Q11.2 7.8 10 7.8 H7.8" stroke="#333" stroke-width="1.3" fill="none"/></svg>
<div style="position:absolute;left:1061px;top:802px;width:83px;height:20px;background:#fdf1dc;border-radius:4px"></div>
<div class="t" style="left:1070.5px;top:806.14px;font-size:12px;line-height:12px;font-weight:700;color:#e39e0b;width:64px;text-align:center">Adjustment</div>
<div class="t" style="left:1173px;top:806.30px;font-size:13px;line-height:13px;font-weight:400;color:#222;">02/02/2024</div>
<div class="t" style="left:1298px;top:806.30px;font-size:13px;line-height:13px;font-weight:400;color:#222;">04/02/2024</div>
<div style="position:absolute;left:1438px;top:801px;width:179px;height:24px;background:#ffe9e9;border-radius:4px"></div>
<div class="t" style="left:1447.5px;top:807.14px;font-size:12px;line-height:12px;font-weight:700;color:#f0303c;width:160px;text-align:center">Negative settlement amount</div>
<div class="t" style="left:1708px;top:807.14px;font-size:12px;line-height:12px;font-weight:400;color:#222;letter-spacing:-0.1px">S$1</div>
<div class="t" style="left:1769.5px;top:806.95px;font-size:14px;line-height:14px;font-weight:700;color:#009995;letter-spacing:-0.05px">View details</div>
<div class="t" style="left:903px;top:921.51px;font-size:12.75px;line-height:12.75px;font-weight:400;color:#222;letter-spacing:-0.05px">7328020159414388482</div>
<svg style="position:absolute;left:1039px;top:922px;" width="12" height="12" viewBox="0 0 12 12" fill="none"><rect x="0.8" y="4.2" width="7" height="7" rx="1.2" stroke="#333" stroke-width="1.3"/><path d="M4.2 4.2 V2 Q4.2 0.8 5.4 0.8 H10 Q11.2 0.8 11.2 2 V6.6 Q11.2 7.8 10 7.8 H7.8" stroke="#333" stroke-width="1.3" fill="none"/></svg>
<div style="position:absolute;left:1060px;top:917px;width:84px;height:20px;background:#fdf1dc;border-radius:4px"></div>
<div class="t" style="left:1069.5px;top:921.14px;font-size:12px;line-height:12px;font-weight:700;color:#e39e0b;width:65px;text-align:center">Adjustment</div>
<div class="t" style="left:1173px;top:921.30px;font-size:13px;line-height:13px;font-weight:400;color:#222;">25/01/2024</div>
<div class="t" style="left:1298px;top:921.30px;font-size:13px;line-height:13px;font-weight:400;color:#222;">27/01/2024</div>
<div style="position:absolute;left:1438px;top:916px;width:179px;height:24px;background:#ffe9e9;border-radius:4px"></div>
<div class="t" style="left:1447.5px;top:922.14px;font-size:12px;line-height:12px;font-weight:700;color:#f0303c;width:160px;text-align:center">Negative settlement amount</div>
<div class="t" style="left:1708px;top:922.14px;font-size:12px;line-height:12px;font-weight:400;color:#222;letter-spacing:-0.1px">S$3.01</div>
<div class="t" style="left:1769.5px;top:921.95px;font-size:14px;line-height:14px;font-weight:700;color:#009995;letter-spacing:-0.05px">View details</div>
<div class="t" style="left:905px;top:839.91px;font-size:11.8px;line-height:11.8px;font-weight:700;color:#121212;letter-spacing:-0.1px">Logistics reimbursement</div>
<svg style="position:absolute;left:1049px;top:840px;" width="12" height="12" viewBox="0 0 12 12" fill="none"><circle cx="6" cy="6" r="5.4" stroke="#8f8f8f" stroke-width="1"/><text x="6" y="8.7" font-family="Liberation Sans" font-size="7.8" fill="#7a7a7a" text-anchor="middle">?</text></svg>
<div class="t" style="left:905px;top:857.52px;font-size:12.5px;line-height:12.5px;font-weight:400;color:#222;">Related order ID:</div>
<div class="t" style="left:905px;top:875.82px;font-size:12.5px;line-height:12.5px;font-weight:400;color:#222;">576571304739374284</div>
<div class="t" style="left:905px;top:954.71px;font-size:11.8px;line-height:11.8px;font-weight:700;color:#121212;letter-spacing:-0.1px">Logistics reimbursement</div>
<svg style="position:absolute;left:1049px;top:955px;" width="12" height="12" viewBox="0 0 12 12" fill="none"><circle cx="6" cy="6" r="5.4" stroke="#8f8f8f" stroke-width="1"/><text x="6" y="8.7" font-family="Liberation Sans" font-size="7.8" fill="#7a7a7a" text-anchor="middle">?</text></svg>
<div class="t" style="left:905px;top:972.32px;font-size:12.5px;line-height:12.5px;font-weight:400;color:#222;">Related order ID:</div>
<div class="t" style="left:905px;top:990.62px;font-size:12.5px;line-height:12.5px;font-weight:400;color:#222;">576564185920210206</div>
<div style="position:absolute;left:1275px;top:598px;width:143px;height:88px;box-sizing:border-box;border:5px solid #e91d2b"></div>
<div style="position:absolute;left:1488px;top:1039px;width:26px;height:24px;box-sizing:border-box;background:#f7f7f7;border-radius:4px;"></div>
<svg style="position:absolute;left:1496px;top:1045px;" width="10" height="12" viewBox="0 0 10 12" fill="none"><path d="M7 1.5 L2.5 6 L7 10.5" stroke="#c4c4c4" stroke-width="1.3" fill="none"/></svg>
<div style="position:absolute;left:1522px;top:1039px;width:24px;height:24px;box-sizing:border-box;background:#fff;border-radius:4px;border:1px solid #009995;"></div>
<div class="t" style="left:1522px;top:1045.00px;font-size:13px;line-height:13px;font-weight:400;color:#121212;width:24px;text-align:center;-webkit-text-stroke:0.25px #121212">1</div>
<div style="position:absolute;left:1554px;top:1039px;width:24px;height:24px;box-sizing:border-box;background:#f2f2f2;border-radius:4px;"></div>
<div class="t" style="left:1554px;top:1045.00px;font-size:13px;line-height:13px;font-weight:400;color:#121212;width:24px;text-align:center;-webkit-text-stroke:0.25px #121212">2</div>
<div style="position:absolute;left:1586px;top:1039px;width:24px;height:24px;box-sizing:border-box;background:#f2f2f2;border-radius:4px;"></div>
<div class="t" style="left:1586px;top:1045.00px;font-size:13px;line-height:13px;font-weight:400;color:#121212;width:24px;text-align:center;-webkit-text-stroke:0.25px #121212">3</div>
<div style="position:absolute;left:1618px;top:1039px;width:24px;height:24px;box-sizing:border-box;background:#f2f2f2;border-radius:4px;"></div>
<div class="t" style="left:1618px;top:1045.00px;font-size:13px;line-height:13px;font-weight:400;color:#121212;width:24px;text-align:center;-webkit-text-stroke:0.25px #121212">4</div>
<div style="position:absolute;left:1650px;top:1039px;width:24px;height:24px;box-sizing:border-box;background:#f2f2f2;border-radius:4px;"></div>
<div class="t" style="left:1650px;top:1045.00px;font-size:13px;line-height:13px;font-weight:400;color:#121212;width:24px;text-align:center;-webkit-text-stroke:0.25px #121212">5</div>
<div style="position:absolute;left:1682px;top:1039px;width:24px;height:24px;box-sizing:border-box;background:#f7f7f7;border-radius:4px;"></div>
<div class="t" style="left:1682px;top:1043.84px;font-size:12px;line-height:12px;font-weight:400;color:#c4c4c4;width:24px;text-align:center">···</div>
<div style="position:absolute;left:1714px;top:1039px;width:26px;height:24px;box-sizing:border-box;background:#f2f2f2;border-radius:4px;"></div>
<div class="t" style="left:1714px;top:1045.00px;font-size:13px;line-height:13px;font-weight:400;color:#121212;width:26px;text-align:center;-webkit-text-stroke:0.25px #121212">43</div>
<div style="position:absolute;left:1748px;top:1039px;width:26px;height:24px;box-sizing:border-box;background:#f2f2f2;border-radius:4px;"></div>
<svg style="position:absolute;left:1756px;top:1045px;" width="10" height="12" viewBox="0 0 10 12" fill="none"><path d="M3 1.5 L7.5 6 L3 10.5" stroke="#555" stroke-width="1.3" fill="none"/></svg>
<div style="position:absolute;left:1790px;top:1039px;width:90px;height:24px;background:#f2f2f2;border-radius:4px"></div>
<div class="t" style="left:1799px;top:1045.15px;font-size:14px;line-height:14px;font-weight:400;color:#121212;">10/Page</div>
<svg style="position:absolute;left:1857px;top:1046.5px;" width="12" height="10" viewBox="0 0 12 10" fill="none"><path d="M1.5 2.5 L6 7 L10.5 2.5" stroke="#666" stroke-width="1.2" fill="none"/></svg>
</body></html>
